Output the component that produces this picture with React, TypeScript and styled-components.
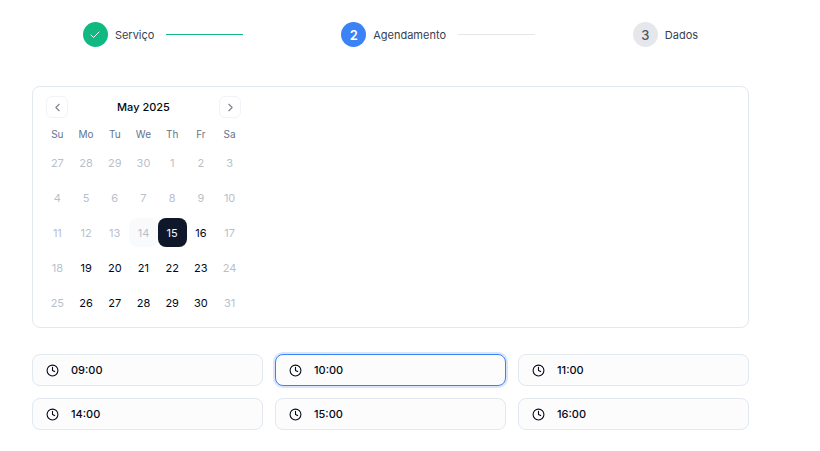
import React, { useState } from "react";
import styled, { createGlobalStyle, css } from "styled-components";
import { Check, ChevronLeft, ChevronRight, Clock } from "lucide-react";

const GlobalStyle = createGlobalStyle`
  *, *::before, *::after { box-sizing: border-box; }
  body {
    margin: 0;
    background: #ffffff;
    color: #020817;
    font-family: Inter, "Noto Sans", sans-serif;
    font-size: 11px;
    line-height: 16px;
  }
  button { font: inherit; color: inherit; margin: 0; padding: 0; cursor: pointer; }
`;

const Page = styled.main`
  padding: 22px 71px 20px 32px;
`;

const Steps = styled.ol`
  display: flex;
  justify-content: space-around;
  list-style: none;
  margin: 0 0 39px;
  padding: 0 8px;
`;

const Step = styled.li`
  display: flex;
  align-items: center;
`;

type Status = "done" | "current" | "upcoming";

const badgeColors = {
  done: css`background: #10b981; color: #ffffff;`,
  current: css`background: #3b82f6; color: #ffffff;`,
  upcoming: css`background: #e5e7eb; color: #4b5563;`,
};

const Badge = styled.span<{ $status: Status }>`
  display: flex;
  align-items: center;
  justify-content: center;
  width: 25px;
  height: 25px;
  margin-right: 7px;
  border-radius: 50%;
  font-size: 13px;
  font-weight: ${(p) => (p.$status === "current" ? 600 : 500)};
  ${(p) => badgeColors[p.$status]}
`;

const StepLabel = styled.span`
  color: #374151;
  font-weight: 400;
`;

const Connector = styled.span<{ $done: boolean }>`
  width: 77px;
  height: 1px;
  margin: 0 12px;
  background: ${(p) => (p.$done ? "#10b981" : "#e5e7eb")};
`;

const Calendar = styled.section`
  padding: 9px 10px 10px;
  margin-bottom: 26px;
  border: 1px solid #e2e8f0;
  border-radius: 8px;
`;

const CalendarHeader = styled.header`
  display: flex;
  align-items: center;
  justify-content: space-between;
  width: 201px;
  padding: 0 3px;
  margin-bottom: 8px;
`;

const Month = styled.h2`
  margin: 0;
  font-size: 11px;
  font-weight: 500;
`;

const NavButton = styled.button`
  display: flex;
  align-items: center;
  justify-content: center;
  width: 22px;
  height: 22px;
  border: 1px solid #e2e8f0;
  border-radius: 6px;
  background: transparent;
  opacity: 0.5;
`;

const MonthTable = styled.table`
  width: 201px;
  table-layout: fixed;
  border-collapse: collapse;
`;

const Weekday = styled.th`
  height: 16px;
  padding: 0;
  color: #64748b;
  font-size: 10px;
  font-weight: 400;
`;

const DayCell = styled.td`
  padding: 6px 0 0;
`;

type DayKind = "outside" | "disabled" | "today" | "open";

const DayButton = styled.button<{ $kind: DayKind; $selected: boolean }>`
  display: block;
  width: 100%;
  height: 29px;
  border: 0;
  border-radius: 8px;
  background: ${(p) => (p.$selected ? "#0f172a" : p.$kind === "today" ? "#f8fafc" : "transparent")};
  color: ${(p) => (p.$selected ? "#f8fafc" : p.$kind === "open" ? "#020817" : "#b9bfca")};
  font-weight: 400;
`;

const Slots = styled.div`
  display: grid;
  grid-template-columns: repeat(3, 1fr);
  gap: 12px;
`;

const Slot = styled.button<{ $selected: boolean }>`
  display: flex;
  align-items: center;
  gap: 12px;
  height: 32px;
  padding: 0 13px;
  border: 1px solid ${(p) => (p.$selected ? "#3b82f6" : "#e2e8f0")};
  border-radius: 8px;
  background: #fcfcfd;
  box-shadow: ${(p) => (p.$selected ? "0 0 0 2px rgba(59, 130, 246, 0.2)" : "none")};
  font-weight: 500;
`;

const steps: { label: string; status: Status }[] = [
  { label: "Serviço", status: "done" },
  { label: "Agendamento", status: "current" },
  { label: "Dados", status: "upcoming" },
];

const weekdays = ["Su", "Mo", "Tu", "We", "Th", "Fr", "Sa"];

const weeks = [
  [27, 28, 29, 30, 1, 2, 3],
  [4, 5, 6, 7, 8, 9, 10],
  [11, 12, 13, 14, 15, 16, 17],
  [18, 19, 20, 21, 22, 23, 24],
  [25, 26, 27, 28, 29, 30, 31],
];

const times = ["09:00", "10:00", "11:00", "14:00", "15:00", "16:00"];

function dayKind(day: number, week: number, column: number): DayKind {
  if (week === 0 && day > 20) return "outside";
  if (day === 14) return "today";
  if (day < 14 || column === 0 || column === 6) return "disabled";
  return "open";
}

export default function App() {
  const [selectedDay, setSelectedDay] = useState(15);
  const [selectedTime, setSelectedTime] = useState("10:00");

  return (
    <>
      <GlobalStyle />
      <Page>
        <Steps>
          {steps.map((step, i) => (
            <Step key={step.label} aria-current={step.status === "current" ? "step" : undefined}>
              <Badge $status={step.status}>
                {step.status === "done" ? <Check size={12} strokeWidth={2} /> : i + 1}
              </Badge>
              <StepLabel>{step.label}</StepLabel>
              {i < steps.length - 1 && <Connector $done={step.status === "done"} />}
            </Step>
          ))}
        </Steps>

        <Calendar>
          <CalendarHeader>
            <NavButton type="button" aria-label="Previous month">
              <ChevronLeft size={13} />
            </NavButton>
            <Month id="month">May 2025</Month>
            <NavButton type="button" aria-label="Next month">
              <ChevronRight size={13} />
            </NavButton>
          </CalendarHeader>
          <MonthTable aria-labelledby="month">
            <thead>
              <tr>
                {weekdays.map((name) => (
                  <Weekday key={name} scope="col">{name}</Weekday>
                ))}
              </tr>
            </thead>
            <tbody>
              {weeks.map((week, w) => (
                <tr key={w}>
                  {week.map((day, column) => {
                    const kind = dayKind(day, w, column);
                    const selected = kind === "open" && day === selectedDay;
                    return (
                      <DayCell key={column}>
                        <DayButton
                          type="button"
                          $kind={kind}
                          $selected={selected}
                          aria-pressed={selected}
                          disabled={kind !== "open"}
                          onClick={() => setSelectedDay(day)}
                        >
                          {day}
                        </DayButton>
                      </DayCell>
                    );
                  })}
                </tr>
              ))}
            </tbody>
          </MonthTable>
        </Calendar>

        <Slots>
          {times.map((time) => (
            <Slot
              key={time}
              type="button"
              $selected={time === selectedTime}
              aria-pressed={time === selectedTime}
              onClick={() => setSelectedTime(time)}
            >
              <Clock size={13} />
              {time}
            </Slot>
          ))}
        </Slots>
      </Page>
    </>
  );
}
